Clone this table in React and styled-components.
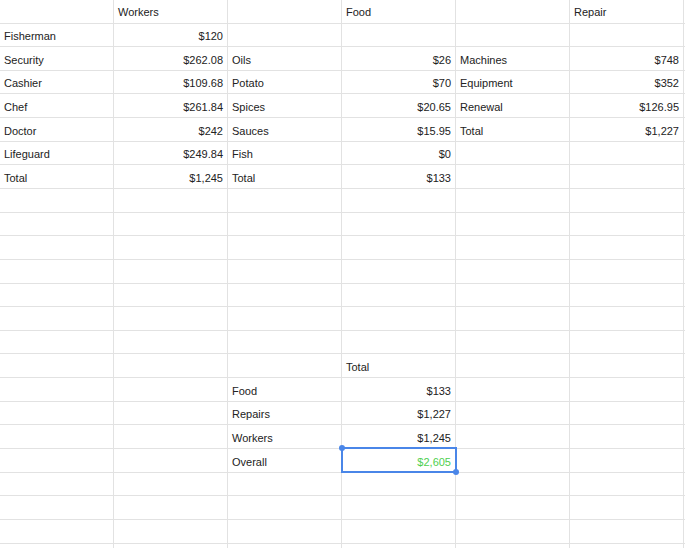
import styled, { createGlobalStyle } from "styled-components";

const GlobalStyle = createGlobalStyle`
  html, body {
    margin: 0;
    padding: 0;
    background: #ffffff;
    overflow: hidden;
  }
  body {
    font-family: "Liberation Sans", Arial, sans-serif;
  }
`;

const ROWS = [
  ["", "Workers", "", "Food", "", "Repair"],
  ["Fisherman", "$120"],
  ["Security", "$262.08", "Oils", "$26", "Machines", "$748"],
  ["Cashier", "$109.68", "Potato", "$70", "Equipment", "$352"],
  ["Chef", "$261.84", "Spices", "$20.65", "Renewal", "$126.95"],
  ["Doctor", "$242", "Sauces", "$15.95", "Total", "$1,227"],
  ["Lifeguard", "$249.84", "Fish", "$0"],
  ["Total", "$1,245", "Total", "$133"],
  [],
  [],
  [],
  [],
  [],
  [],
  [],
  ["", "", "", "Total"],
  ["", "", "Food", "$133"],
  ["", "", "Repairs", "$1,227"],
  ["", "", "Workers", "$1,245"],
  ["", "", "Overall", "$2,605"],
  [],
  [],
  [],
  [],
];

const COLS = 7;
const SELECTED = { row: 19, col: 3 };

function Spreadsheet() {
  return (
    <Sheet>
      {ROWS.map((row, r) =>
        Array.from({ length: COLS }).map((_, c) => {
          const value = row[c] || "";
          const numeric = value.startsWith("$");
          const selected = r === SELECTED.row && c === SELECTED.col;
          return (
            <Cell
              key={r + "-" + c}
              $numeric={numeric}
              $header={r === 0}
              $highlight={selected}
            >
              {value}
              {selected && (
                <Selection>
                  <Handle $corner="top" />
                  <Handle $corner="bottom" />
                </Selection>
              )}
            </Cell>
          );
        })
      )}
    </Sheet>
  );
}

function App() {
  return (
    <>
      <GlobalStyle />
      <Spreadsheet />
    </>
  );
}

const Sheet = styled.div`
  display: grid;
  grid-template-columns: repeat(6, 114px) 1fr;
  grid-template-rows: 23.5px repeat(23, 23.65px);
  width: 685px;
  height: 548px;
  overflow: hidden;
`;

const Cell = styled.div`
  position: relative;
  box-sizing: border-box;
  border-right: 1px solid #e2e2e2;
  border-bottom: 1px solid #e2e2e2;
  display: flex;
  align-items: ${(p) => (p.$header ? "center" : "flex-end")};
  justify-content: ${(p) => (p.$numeric ? "flex-end" : "flex-start")};
  padding: ${(p) => (p.$header ? "2px 4px 0" : "0 4px 3px")};
  font-size: 11px;
  line-height: 13px;
  color: ${(p) => (p.$highlight ? "#4fcf4f" : "#222222")};
  white-space: nowrap;
  overflow: visible;
`;

const Selection = styled.div`
  position: absolute;
  top: -2px;
  left: -1px;
  right: -2px;
  bottom: -1px;
  border: 2px solid #4a86e8;
  pointer-events: none;
  z-index: 2;
`;

const Handle = styled.span`
  position: absolute;
  width: 6px;
  height: 6px;
  border-radius: 50%;
  background: #4a86e8;
  ${(p) =>
    p.$corner === "top"
      ? "top: -4px; left: -4px;"
      : "bottom: -4px; right: -4px;"}
`;

export default App;
